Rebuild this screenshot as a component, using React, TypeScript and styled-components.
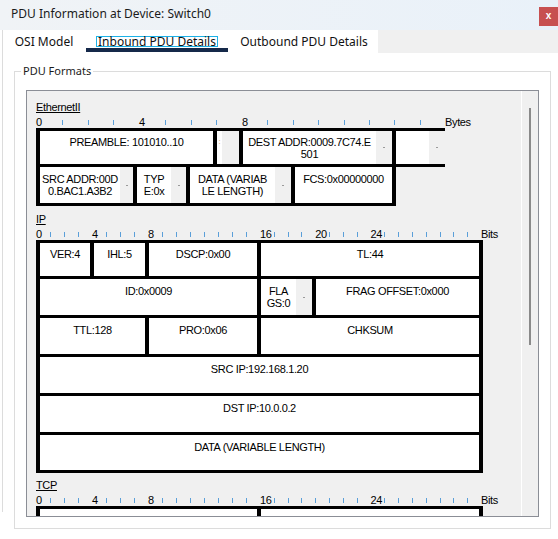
import React from 'react';
import styled, { createGlobalStyle } from 'styled-components';

type CellSpec = { w: number; text?: string; stub?: number; last?: boolean; mark?: boolean };
type RowSpec = { h: number; cells: CellSpec[] };
type SectionSpec = {
  title: string;
  unit: string;
  slots: number[];
  numbers: number[];
  rows: RowSpec[];
  gap: number;
};

const GlobalStyle = createGlobalStyle`
  html, body { margin: 0; padding: 0; background: #fff; }
  body { width: 558px; height: 539px; overflow: hidden; font-family: "Noto Sans", "Liberation Sans", sans-serif; }
  * { box-sizing: border-box; }
`;

const Window = styled.div`
  width: 558px;
  height: 539px;
  display: flex;
  flex-direction: column;
  background: #fff;
  overflow: hidden;
`;

const TitleBar = styled.div`
  flex: 0 0 30px;
  display: flex;
  align-items: flex-start;
  justify-content: space-between;
  background: linear-gradient(90deg, #f0f3f6 0%, #e9f1f9 100%);
`;

const Title = styled.div`
  padding: 5px 0 0 11px;
  font-size: 12px;
  line-height: 17px;
  color: #1b1b1b;
`;

const CloseButton = styled.div`
  margin-top: 7px;
  width: 19px;
  height: 19px;
  background: #c75050;
  color: #fff;
  font: bold 10px/10px "Liberation Sans", Arial, sans-serif;
  display: flex;
  align-items: center;
  justify-content: center;
  padding-bottom: 1px;
`;

const Body = styled.div`
  position: relative;
  flex: 1;
  min-height: 0;
  display: flex;
  flex-direction: column;
  &::before {
    content: '';
    position: absolute;
    left: 2px;
    top: 0;
    height: 482px;
    width: 1px;
    background: #dcdcdc;
  }
`;

const TabBar = styled.div`
  flex: 0 0 23px;
  display: flex;
  background: #f0f0f0;
`;

const TabList = styled.div`
  display: flex;
  gap: 2px;
  padding-left: 4px;
  background: #fff;
`;

const Tab = styled.div<{ $w: number; $active?: boolean }>`
  position: relative;
  flex: 0 0 ${(p) => p.$w}px;
  display: flex;
  align-items: center;
  justify-content: center;
  font-size: 12px;
  color: #111;
  &::after {
    content: '';
    display: ${(p) => (p.$active ? 'block' : 'none')};
    position: absolute;
    left: 0;
    right: 0;
    bottom: 1px;
    height: 4px;
    background: #15294a;
  }
`;

const TabLabel = styled.span<{ $focus?: boolean }>`
  display: block;
  height: 11px;
  line-height: 9px;
  padding: 0 1px;
  white-space: nowrap;
  border: 1px solid ${(p) => (p.$focus ? '#1cb1e6' : 'transparent')};
`;

const TabFiller = styled.div`
  flex: 1;
`;

const Content = styled.div`
  flex: 1;
  min-height: 0;
  display: flex;
  padding: 18px 10px 10px 14px;
`;

const GroupBox = styled.div`
  position: relative;
  flex: 1;
  min-height: 0;
  display: flex;
  border: 1px solid #dcdcdc;
  padding: 18px 11px 11px 11px;
`;

const GroupLabel = styled.span`
  position: absolute;
  top: -8px;
  left: 6px;
  padding: 0 2px;
  background: #fff;
  font-size: 11px;
  line-height: 14px;
  color: #1b1b1b;
`;

const Panel = styled.div`
  flex: 1;
  min-height: 0;
  display: flex;
  border: 1px solid #8b8e96;
  background: #f0f0f0;
  overflow: hidden;
`;

const ScrollArea = styled.div`
  flex: 1;
  min-height: 0;
  display: flex;
  flex-direction: column;
  padding: 10px 0 0 9px;
  overflow: hidden;
`;

const ScrollTrack = styled.div`
  flex: 0 0 17px;
  border-left: 1px solid #fff;
  background: #f0f0f0;
  padding: 17px 0 0 7px;
`;

const ScrollThumb = styled.div`
  width: 2px;
  height: 237px;
  background: #8a8a8a;
`;

const Section = styled.section<{ $gap: number }>`
  flex: 0 0 auto;
  display: flex;
  flex-direction: column;
  align-items: flex-start;
  margin-top: ${(p) => p.$gap}px;
  font: 11px/12px "Liberation Sans", Arial, sans-serif;
  letter-spacing: -0.35px;
  color: #000;
`;

const SectionTitle = styled.div`
  height: 12px;
  text-decoration: underline;
  margin-bottom: 3px;
`;

const Ruler = styled.div`
  display: flex;
  height: 12px;
`;

const RulerSlot = styled.div<{ $w: number }>`
  flex: 0 0 ${(p) => p.$w}px;
  display: flex;
  align-items: flex-start;
  white-space: nowrap;
`;

const Tick = styled.span`
  width: 1px;
  height: 5px;
  margin-top: 4px;
  background: #5b9fd9;
`;

const Row = styled.div<{ $h: number; $first?: boolean }>`
  box-sizing: content-box;
  flex: 0 0 auto;
  display: flex;
  height: ${(p) => p.$h}px;
  border-bottom: 3px solid #000;
  border-top: ${(p) => (p.$first ? '3px solid #000' : 'none')};
`;

const Cell = styled.div<{ $w: number; $last?: boolean }>`
  flex: 0 0 ${(p) => p.$w}px;
  display: flex;
  border-left: 4px solid #000;
  border-right: ${(p) => (p.$last ? '4px solid #000' : 'none')};
`;

const Field = styled.div`
  flex: 1 1 auto;
  min-width: 0;
  background: #fff;
  display: flex;
  align-items: center;
  justify-content: center;
  overflow: hidden;
`;

const FieldText = styled.div<{ $mark?: boolean }>`
  height: 24px;
  white-space: pre;
  text-align: center;
  color: ${(p) => (p.$mark ? '#e3a35a' : '#000')};
  font-size: ${(p) => (p.$mark ? '8px' : '11px')};
`;

const Stub = styled.div<{ $w: number }>`
  flex: 0 0 ${(p) => p.$w}px;
  background: #f0f0f0;
  display: flex;
  align-items: center;
  justify-content: center;
`;

const Dash = styled.span`
  width: 2px;
  height: 1px;
  background: #9a9a9a;
`;

const byteSlots = [...Array(8).fill(25.75), ...Array(8).fill(25.375)];
const bitSlots = [...Array(16).fill(14), ...Array(16).fill(13.8125)];

const sections: SectionSpec[] = [
  {
    title: 'EthernetII',
    unit: 'Bytes',
    slots: byteSlots,
    numbers: [0, 4, 8],
    gap: 0,
    rows: [
      {
        h: 33,
        cells: [
          { w: 177, text: 'PREAMBLE: 101010..10' },
          { w: 26, text: ':', stub: 17, mark: true },
          { w: 153, text: 'DEST ADDR:0009.7C74.E\n501', stub: 16 },
          { w: 53, text: '', stub: 16 },
        ],
      },
      {
        h: 36,
        cells: [
          { w: 97, text: 'SRC ADDR:00D\n0.BAC1.A3B2', stub: 13 },
          { w: 53, text: 'TYP\nE:0x', stub: 15 },
          { w: 105, text: 'DATA (VARIAB\nLE LENGTH)', stub: 16 },
          { w: 105, text: 'FCS:0x00000000', last: true },
        ],
      },
    ],
  },
  {
    title: 'IP',
    unit: 'Bits',
    slots: bitSlots,
    numbers: [0, 4, 8, 16, 20, 24],
    gap: 7,
    rows: [
      {
        h: 33,
        cells: [
          { w: 54, text: 'VER:4' },
          { w: 55, text: 'IHL:5' },
          { w: 112, text: 'DSCP:0x00' },
          { w: 226, text: 'TL:44', last: true },
        ],
      },
      {
        h: 36,
        cells: [
          { w: 221, text: 'ID:0x0009' },
          { w: 55, text: 'FLA\nGS:0', stub: 16 },
          { w: 171, text: 'FRAG OFFSET:0x000', last: true },
        ],
      },
      {
        h: 36,
        cells: [
          { w: 109, text: 'TTL:128' },
          { w: 112, text: 'PRO:0x06' },
          { w: 226, text: 'CHKSUM', last: true },
        ],
      },
      { h: 36, cells: [{ w: 447, text: 'SRC IP:192.168.1.20', last: true }] },
      { h: 36, cells: [{ w: 447, text: 'DST IP:10.0.0.2', last: true }] },
      { h: 35, cells: [{ w: 447, text: 'DATA (VARIABLE LENGTH)', last: true }] },
    ],
  },
  {
    title: 'TCP',
    unit: 'Bits',
    slots: bitSlots,
    numbers: [0, 4, 8, 16, 24],
    gap: 6,
    rows: [
      {
        h: 36,
        cells: [
          { w: 221, text: '' },
          { w: 226, text: '', last: true },
        ],
      },
    ],
  },
];

function PduSection({ spec }: { spec: SectionSpec }) {
  return (
    <Section $gap={spec.gap}>
      <SectionTitle>{spec.title}</SectionTitle>
      <Ruler>
        {spec.slots.map((w, i) => (
          <RulerSlot key={i} $w={w}>
            {spec.numbers.includes(i) ? <span>{i}</span> : <Tick />}
          </RulerSlot>
        ))}
        <RulerSlot $w={40}>{spec.unit}</RulerSlot>
      </Ruler>
      {spec.rows.map((row, ri) => (
        <Row key={ri} $h={row.h} $first={ri === 0}>
          {row.cells.map((c, ci) => (
            <Cell key={ci} $w={c.w} $last={c.last}>
              <Field>
                <FieldText $mark={c.mark}>{c.text}</FieldText>
              </Field>
              {c.stub ? (
                <Stub $w={c.stub}>{c.mark ? null : <Dash />}</Stub>
              ) : null}
            </Cell>
          ))}
        </Row>
      ))}
    </Section>
  );
}

export default function App() {
  return (
    <Window>
      <GlobalStyle />
      <TitleBar>
        <Title>PDU Information at Device: Switch0</Title>
        <CloseButton>x</CloseButton>
      </TitleBar>
      <Body>
        <TabBar>
          <TabList>
            <Tab $w={80}>
              <TabLabel>OSI Model</TabLabel>
            </Tab>
            <Tab $w={142} $active>
              <TabLabel $focus>Inbound PDU Details</TabLabel>
            </Tab>
            <Tab $w={148}>
              <TabLabel>Outbound PDU Details</TabLabel>
            </Tab>
          </TabList>
          <TabFiller />
        </TabBar>
        <Content>
          <GroupBox>
            <GroupLabel>PDU Formats</GroupLabel>
            <Panel>
              <ScrollArea>
                {sections.map((s) => (
                  <PduSection key={s.title} spec={s} />
                ))}
              </ScrollArea>
              <ScrollTrack>
                <ScrollThumb />
              </ScrollTrack>
            </Panel>
          </GroupBox>
        </Content>
      </Body>
    </Window>
  );
}
